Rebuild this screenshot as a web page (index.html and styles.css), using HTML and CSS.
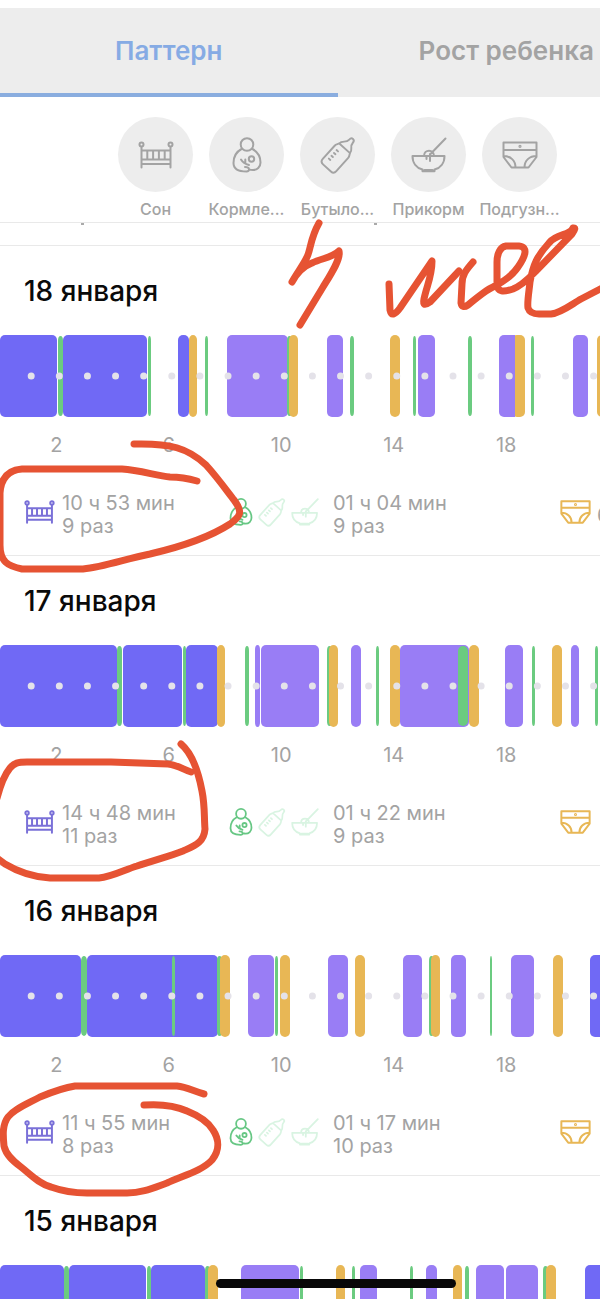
FILE: index.html
```html
<!DOCTYPE html>
<html lang="ru">
<head>
<meta charset="utf-8">
<meta name="viewport" content="width=device-width, initial-scale=1">
<title>Паттерн</title>
<link rel="stylesheet" href="styles.css">
</head>
<body>
<svg class="defs" aria-hidden="true">
  <symbol id="bed" viewBox="0 0 36 28">
    <circle cx="3.5" cy="3.5" r="2"/><circle cx="32.5" cy="3.5" r="2"/>
    <path d="M3.500 6v20.500M32.500 6v20.500M3.500 9.500h29M3.500 18.500h29M3.500 23h29M9.300 9.500v9M15.100 9.500v9M20.900 9.500v9M26.700 9.500v9"/>
  </symbol>
  <symbol id="nurse" viewBox="0 0 30 36">
    <circle cx="15" cy="7.500" r="6.300"/>
    <path d="M9.500 12C4 15 1.500 21 1.500 26c0 6 5 8.500 13 8.500 1.800 0 2.800-1 2.500-2.500-.3-1.500-1.600-2-4-2M20.500 12c5.500 3 8 8.500 8 13.500 0 4.500-3.500 7.500-7.500 7.500-1.500 0-2.800-.2-4-.6"/>
    <circle cx="19.500" cy="22" r="2.700"/>
    <path d="M9 22.500c1.500 2.500 4 4.500 8 5.500M13.300 22.500v4"/>
  </symbol>
  <symbol id="bottle" viewBox="0 0 36 36">
    <g transform="translate(1.500 -1) rotate(42 18 18) translate(18 18) scale(.96) translate(-18 -18)">
      <path d="M10.500 10h15M10.500 10c-.8 2-2 3-2 5v18.500q0 4 4 4h11q4 0 4-4V15c0-2-1.200-3-2-5M10.500 10c0-5 5-4.500 5-10q0-3 2.500-3t2.500 3c0 5.500 5 5 5 10M13 17h2M13 21h2M13 25h2M13 29h2"/>
    </g>
  </symbol>
  <symbol id="bowl" viewBox="0 0 36 36">
    <path d="M1.500 19h32c0 7-4 12-10 13.500v1.700h-12v-1.700c-6-1.500-10-6.500-10-13.500zM34.500 1.500L19.500 17M13 19c0-7 10-7 10 0M15.500 19.500v2.500M19 17v7M13.500 33h8"/>
  </symbol>
  <symbol id="diaper" viewBox="0 0 36 28">
    <path d="M1.500 1.500h33v14.500l-8 10.500h-17l-8-10.500zM1.500 9h33M1.500 15c7 0 12 4.500 12 11.500M34.500 15c-7 0-12 4.500-12 11.500"/>
    <circle cx="18" cy="5.300" r=".6"/>
  </symbol>
</svg>

<main class="screen">
  <div class="page">
    <nav class="tabs">
      <button class="tab tab-active" type="button">Паттерн</button>
      <button class="tab" type="button">Рост ребенка</button>
    </nav>

    <div class="filters">
      <button class="filter" type="button"><span class="disc"><svg class="icon wide"><use href="#bed"/></svg></span>Сон</button>
      <button class="filter" type="button"><span class="disc"><svg class="icon narrow"><use href="#nurse"/></svg></span>Кормле...</button>
      <button class="filter" type="button"><span class="disc"><svg class="icon"><use href="#bottle"/></svg></span>Бутыло...</button>
      <button class="filter" type="button"><span class="disc"><svg class="icon"><use href="#bowl"/></svg></span>Прикорм</button>
      <button class="filter" type="button"><span class="disc"><svg class="icon wide"><use href="#diaper"/></svg></span>Подгузн...</button>
    </div>
    <svg class="tail" viewBox="0 0 675 22" aria-hidden="true"><path d="M81 1h3M374 1h3"/></svg>

    <section class="day">
      <h2 class="date">18 января</h2>
      <svg class="chart" viewBox="0 0 675 82" role="img" aria-label="18 января">
        <rect class="night" x="0" width="57"/><rect class="feed" x="58" width="5"/><rect class="night" x="63" width="84"/><rect class="feed" x="148" width="3"/>
        <rect class="night" x="178" width="11"/><rect class="change" x="189" width="8"/><rect class="feed" x="205" width="3"/>
        <rect class="nap" x="227" width="61"/><rect class="feed" x="287" width="5"/><rect class="change" x="289" width="9"/>
        <rect class="nap" x="327" width="16"/><rect class="feed" x="350" width="4"/><rect class="change" x="390" width="10"/>
        <rect class="feed" x="413" width="3"/><rect class="nap" x="418" width="17"/><rect class="feed" x="468" width="4"/>
        <rect class="nap" x="499" width="18"/><rect class="change" x="512" width="13"/><rect class="nap square" x="508" width="7"/><rect class="feed" x="531" width="3"/>
        <rect class="nap" x="573" width="15"/><rect class="change" x="597" width="10"/>
        <path class="dots" d="M31.200 41H660"/>
      </svg>
      <div class="hours"><span>2</span><span>6</span><span>10</span><span>14</span><span>18</span><span></span></div>
      <div class="stats">
        <div class="stat sleep"><svg class="icon wide"><use href="#bed"/></svg><p>10 ч 53 мин<br>9 раз</p></div>
        <div class="stat food"><svg class="icon narrow"><use href="#nurse"/></svg><svg class="icon off"><use href="#bottle"/></svg><svg class="icon off"><use href="#bowl"/></svg><p>01 ч 04 мин<br>9 раз</p></div>
        <div class="stat diapers"><svg class="icon wide"><use href="#diaper"/></svg><p>6</p></div>
      </div>
    </section>

    <section class="day">
      <h2 class="date">17 января</h2>
      <svg class="chart" viewBox="0 0 675 82" role="img" aria-label="17 января">
        <rect class="night" x="0" width="117"/><rect class="feed" x="117" width="5"/><rect class="night" x="123" width="59"/><rect class="feed" x="183" width="3"/>
        <rect class="night" x="186" width="32"/><rect class="change" x="217" width="8"/><rect class="feed" x="245" width="4"/>
        <rect class="nap" x="255" width="5"/><rect class="nap" x="261" width="58"/><rect class="feed" x="327" width="5"/><rect class="change" x="329" width="9"/>
        <rect class="nap" x="351" width="10"/><rect class="feed" x="376" width="3"/><rect class="change" x="390" width="10"/>
        <rect class="nap" x="400" width="69"/><rect class="feed" x="458" width="10"/><rect class="change" x="469" width="10"/>
        <rect class="nap" x="505" width="18"/><rect class="feed" x="532" width="3"/><rect class="change" x="552" width="10"/>
        <rect class="nap" x="571" width="8"/><rect class="feed" x="595" width="3"/>
        <path class="dots" d="M31.200 41H660"/>
      </svg>
      <div class="hours"><span>2</span><span>6</span><span>10</span><span>14</span><span>18</span><span></span></div>
      <div class="stats">
        <div class="stat sleep"><svg class="icon wide"><use href="#bed"/></svg><p>14 ч 48 мин<br>11 раз</p></div>
        <div class="stat food"><svg class="icon narrow"><use href="#nurse"/></svg><svg class="icon off"><use href="#bottle"/></svg><svg class="icon off"><use href="#bowl"/></svg><p>01 ч 22 мин<br>9 раз</p></div>
        <div class="stat diapers"><svg class="icon wide"><use href="#diaper"/></svg></div>
      </div>
    </section>

    <section class="day">
      <h2 class="date">16 января</h2>
      <svg class="chart" viewBox="0 0 675 82" role="img" aria-label="16 января">
        <rect class="night" x="0" width="81"/><rect class="feed" x="81" width="6"/><rect class="night" x="87" width="131"/><rect class="feed" x="172" width="3"/>
        <rect class="feed" x="217" width="5"/><rect class="change" x="220" width="10"/><rect class="nap" x="248" width="26"/>
        <rect class="feed" x="275" width="3"/><rect class="change" x="280" width="10"/><rect class="nap" x="328" width="20"/><rect class="change" x="355" width="10"/>
        <rect class="nap" x="403" width="19"/><rect class="feed" x="429" width="5"/><rect class="change" x="431" width="9"/>
        <rect class="nap" x="451" width="15"/><rect class="feed" x="490" width="2"/><rect class="nap" x="511" width="23"/>
        <rect class="change" x="553" width="10"/><rect class="night" x="590" width="30"/>
        <path class="dots" d="M31.200 41H660"/>
      </svg>
      <div class="hours"><span>2</span><span>6</span><span>10</span><span>14</span><span>18</span><span></span></div>
      <div class="stats">
        <div class="stat sleep"><svg class="icon wide"><use href="#bed"/></svg><p>11 ч 55 мин<br>8 раз</p></div>
        <div class="stat food"><svg class="icon narrow"><use href="#nurse"/></svg><svg class="icon off"><use href="#bottle"/></svg><svg class="icon off"><use href="#bowl"/></svg><p>01 ч 17 мин<br>10 раз</p></div>
        <div class="stat diapers"><svg class="icon wide"><use href="#diaper"/></svg></div>
      </div>
    </section>

    <section class="day">
      <h2 class="date">15 января</h2>
      <svg class="chart" viewBox="0 0 675 82" role="img" aria-label="15 января">
        <rect class="night" x="0" width="64"/><rect class="feed" x="64" width="5"/><rect class="night" x="69" width="77"/><rect class="feed" x="147" width="4"/>
        <rect class="night" x="151" width="54"/><rect class="feed" x="205" width="5"/><rect class="change" x="208" width="10"/><rect class="nap" x="241" width="58"/>
        <rect class="feed" x="300" width="3"/><rect class="change" x="336" width="9"/><rect class="feed" x="352" width="3"/><rect class="nap" x="360" width="17"/>
        <rect class="feed" x="410" width="3"/><rect class="nap" x="426" width="11"/><rect class="change" x="453" width="9"/><rect class="feed" x="465" width="4"/>
        <rect class="nap" x="476" width="28"/><rect class="nap" x="506" width="32"/><rect class="feed" x="543" width="5"/><rect class="change" x="546" width="10"/>
        <rect class="night" x="585" width="30"/>
        <path class="dots" d="M31.200 41H660"/>
      </svg>
    </section>
    <div class="home"></div>
  </div>

  <svg class="marks" viewBox="0 0 600 1299" aria-hidden="true">
    <path d="M319 223C310 239 311 249 307 257C304 264 297 273 292 282C298 271 304 266 312 263C322 258 332 258 339 251C341 259 331 274 323 287L300 325"/>
    <path d="M389 284L390 310Q392 319 400 308L432 261C432 276 427 285 424 299Q422 308 430 302L459 271"/>
    <path d="M473 262C466 270 462 275 462 284L461 303Q462 309 468 305C480 295 486 290 493 287C505 281 512 276 518 267C525 257 529 247 519 246L506 246C500 247 497 254 497 262L497 283C497 293 504 292 513 289C523 285 529 278 536 271L572 234Q577 227 573 228C570 236 557 233 549 243C537 256 533 265 530 282C529 292 527 302 528 308Q530 314 539 314L551 314C561 313 572 304 581 299L606 286"/>
    <path d="M134 444C170 443 188 448 206 465C217 477 227 491 234 500C243 512 241 516 230 524C210 537 180 547 150 554C125 559 104 567 83 569L22 569C8 566 0 562 0 545V493C1 478 8 470 22 469H122C140 470 157 476 170 477C182 477 190 479 197 481"/>
    <path d="M181 744C194 755 199 775 202 791C205 806 204 817 205 829C204 843 194 846 183 851C168 857 154 860 137 866C124 870 112 877 99 878H50C32 877 15 870 5 864L-3 858M-3 798C1 783 5 774 10 768C14 763 18 762 27 762H111L168 764C178 765 184 770 191 772"/>
    <path d="M204 1094C193 1091 187 1087 177 1086H75C62 1088 52 1092 40 1097C27 1104 14 1109 8 1117C2 1125 3 1136 4 1146C6 1155 13 1161 21 1167C30 1174 39 1184 51 1187C62 1191 74 1193 87 1193H127C142 1193 153 1188 167 1183C182 1176 202 1171 212 1160C220 1150 219 1139 213 1130C207 1120 197 1115 187 1111C174 1105 158 1104 144 1105"/>
  </svg>
</main>
</body>
</html>
```
FILE: styles.css
```css
* { box-sizing: border-box; }

body {
  margin: 0;
  background: #fff;
  color: #a3a3a3;
  font-family: Inter, "Noto Sans", sans-serif;
}

button {
  border: 0;
  padding: 0;
  background: none;
  color: inherit;
  font: inherit;
}

p, h2 { margin: 0; }

.defs { position: absolute; width: 0; height: 0; }

.screen {
  position: relative;
  height: 100vh;
  overflow: hidden;
}

/* The app surface runs past the right edge of the window. */
.page { width: 112.5%; padding-top: 8px; }

.tabs { display: flex; background: #ededed; }

.tab {
  flex: 1;
  height: 89px;
  border-bottom: 4px solid transparent;
  font-size: 26px;
  font-weight: 600;
}

.tab-active { border-bottom-color: #8aaddf; color: #86abe4; }

.filters {
  display: flex;
  justify-content: center;
  gap: 16px;
  padding-top: 20px;
  border-bottom: 1px solid #e9e9e9;
}

.filter {
  display: flex;
  flex-direction: column;
  align-items: center;
  gap: 5px;
  width: 75px;
  padding-bottom: 1px;
  font-size: 16px;
  font-weight: 500;
  line-height: 24px;
  white-space: nowrap;
}

.disc {
  display: flex;
  align-items: center;
  justify-content: center;
  width: 75px;
  height: 75px;
  border-radius: 50%;
  background: #ededed;
}

.icon {
  flex: none;
  width: 36px;
  height: 36px;
  overflow: visible;
  fill: none;
  stroke: currentColor;
  stroke-width: 2;
  stroke-linecap: round;
  stroke-linejoin: round;
}

.icon use, symbol { overflow: visible; }

.wide { height: 28px; }
.narrow { width: 30px; }

.tail { display: block; width: 100%; stroke: #aaa; stroke-width: 2; }

.day { border-top: 1px solid #e9e9e9; }

.date {
  padding: 30px 24px 29px;
  color: #0a0a0a;
  font-size: 28px;
  font-weight: 500;
  line-height: 30px;
}

.chart { display: block; width: 100%; }
.chart rect { y: 0; height: 82px; rx: 5px; }
.chart .night { fill: #7069f5; }
.chart .nap { fill: #997df5; }
.chart .change { fill: #e8b755; }
.chart .feed { y: 1px; height: 80px; fill: #6bcb80; }
.chart .square { rx: 0; }

.dots {
  stroke: #e4e2e9;
  stroke-width: 7;
  stroke-linecap: round;
  stroke-dasharray: 0 28.120;
}

.hours {
  display: flex;
  padding: 16px 0 35px;
  font-size: 20px;
  line-height: 24px;
}

.hours span { flex: 1; text-align: center; }

.stats {
  display: flex;
  height: 63px;
  padding-left: 24px;
  font-size: 20px;
  line-height: 23px;
}

.stat { display: flex; align-items: center; height: 46px; }
.stat p { white-space: nowrap; }
.stat .icon { width: 28px; height: 28px; margin-bottom: 6px; stroke-width: 2.3; }
.stat .wide { width: 31px; height: 24px; }
.stat .narrow { width: 24px; }

.sleep { flex: 0 0 205px; gap: 7px; }
.food { flex: 0 0 331px; gap: 5px; }
.food p { padding-left: 9px; }
.diapers { gap: 6px; }

.sleep .icon { color: #7a70d8; }
.food .icon { color: #67c784; }
.food .off { color: #d9f4e2; }
.diapers .icon { color: #e8b755; }

.home {
  position: absolute;
  bottom: 11px;
  left: 36%;
  width: 40%;
  height: 9px;
  border-radius: 5px;
  background: #080808;
}

.marks {
  position: absolute;
  top: 0;
  left: 0;
  width: 100%;
  fill: none;
  stroke: #e65333;
  stroke-width: 7;
  stroke-linecap: round;
  stroke-linejoin: round;
  pointer-events: none;
}
```
